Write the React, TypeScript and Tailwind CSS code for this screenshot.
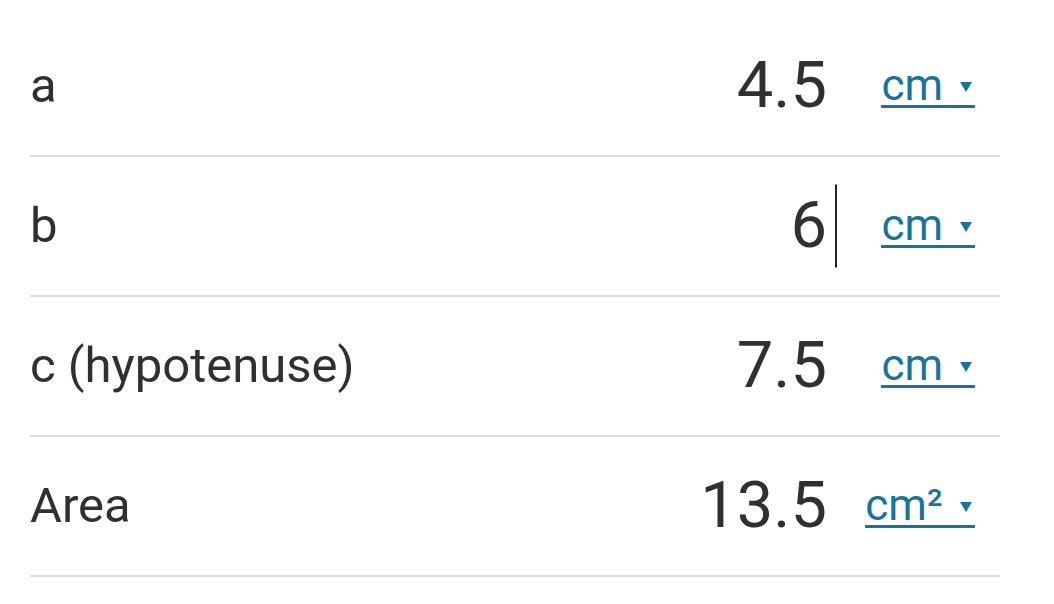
import React from "react";

type Row = { label: string; value: string; unit: string; cursor?: boolean };

const rows: Row[] = [
  { label: "a", value: "4.5", unit: "cm" },
  { label: "b", value: "6", unit: "cm", cursor: true },
  { label: "c (hypotenuse)", value: "7.5", unit: "cm" },
  { label: "Area", value: "13.5", unit: "cm²" },
];

function Caret() {
  return (
    <svg
      width="12"
      height="10"
      viewBox="0 0 12 10"
      className="shrink-0 w-[12px] h-[10px] ml-[17px] mb-[13px] self-end"
    >
      <polygon points="0,0 12,0 6,10" fill="#1a7399" />
    </svg>
  );
}

export default function App() {
  return (
    <div
      className="w-[1054px] h-[604px] bg-white overflow-hidden pt-[17px] pl-[30px] pr-[54px] text-[#303030]"
      style={{ fontFamily: "Roboto, 'Noto Sans', Arial, sans-serif" }}
    >
      {rows.map((r) => (
        <div key={r.label} className="flex items-center h-[140px] border-b-2 border-[#dedede]">
          <div className="flex-1 text-[49px] leading-normal">{r.label}</div>
          <div className="relative text-[65px] leading-normal">
            {r.value}
            {r.cursor && (
              <span className="absolute right-[-10px] top-1/2 -translate-y-1/2 w-[2px] h-[83px] bg-[#222]" />
            )}
          </div>
          <div className="w-[173px] flex justify-end pr-[25px]">
            <span className="inline-flex items-end border-b-[3px] border-[#1a7399] text-[#1a7399] text-[44px] leading-[40px] pr-[3px]">
              <span>{r.unit}</span>
              <Caret />
            </span>
          </div>
        </div>
      ))}
    </div>
  );
}
